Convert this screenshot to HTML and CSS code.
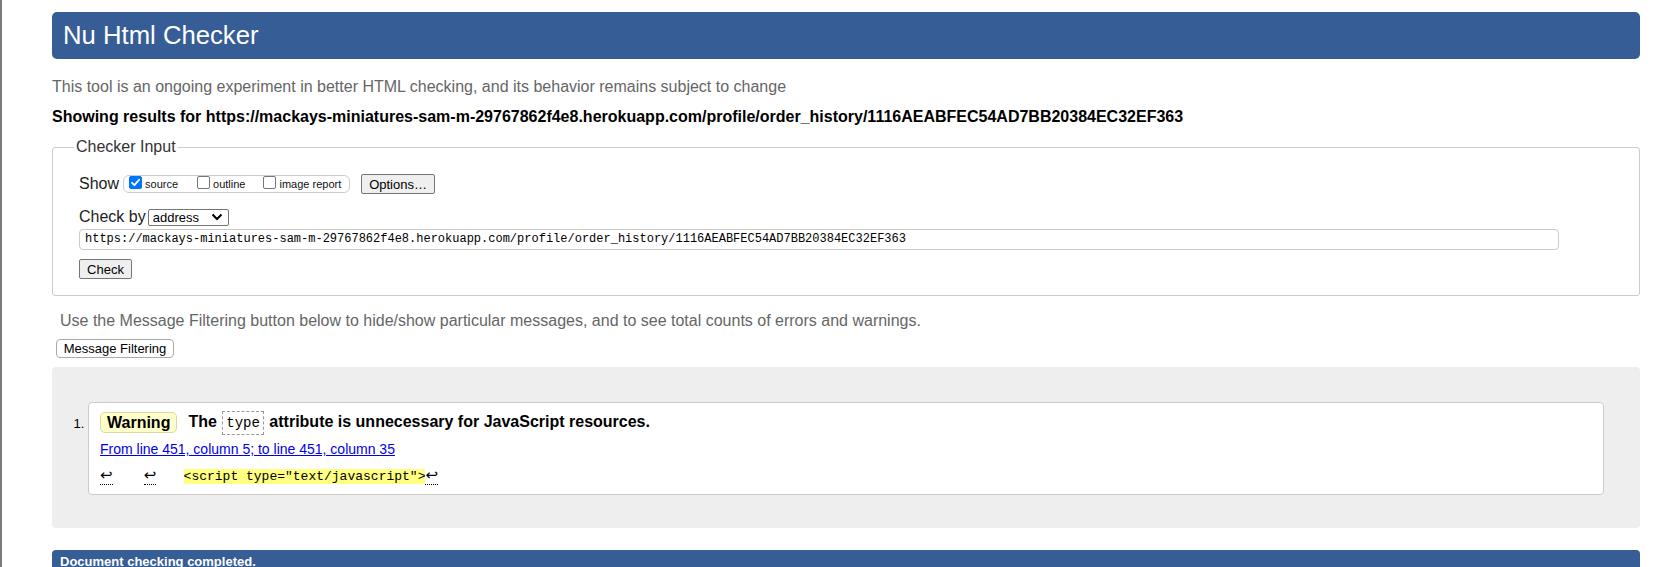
FILE: index.html
```html
<!DOCTYPE html>
<html lang="en">
<head>
<meta charset="utf-8">
<title>Nu Html Checker</title>
<link rel="stylesheet" href="styles.css">
</head>
<body>
<div class="page">
  <h1 class="title">Nu Html Checker</h1>
  <p class="intro">This tool is an ongoing experiment in better HTML checking, and its behavior remains subject to change</p>
  <p class="showing">Showing results for https://mackays-miniatures-sam-m-29767862f4e8.herokuapp.com/profile/order_history/1116AEABFEC54AD7BB20384EC32EF363</p>

  <fieldset class="input-box">
    <legend class="legend">Checker Input</legend>
    <div class="row show-row">
      <span class="label">Show</span>
      <span class="show-group">
        <label class="opt"><span class="cb checked"><svg viewBox="0 0 13 13" width="13" height="13"><path d="M3 6.8 L5.4 9.2 L10.2 3.6" fill="none" stroke="#fff" stroke-width="1.8" stroke-linecap="round" stroke-linejoin="round"/></svg></span>source</label>
        <label class="opt opt-outline"><span class="cb"></span>outline</label>
        <label class="opt opt-image"><span class="cb"></span>image report</label>
      </span>
      <span class="btn btn-options">Options…</span>
    </div>
    <div class="row checkby-row">
      <span class="label">Check by</span>
      <span class="select">address<svg class="chev" viewBox="0 0 12 8" width="12" height="8"><path d="M1.5 1.5 L6 6 L10.5 1.5" fill="none" stroke="#000" stroke-width="2"/></svg></span>
    </div>
    <div class="url-input">https://mackays-miniatures-sam-m-29767862f4e8.herokuapp.com/profile/order_history/1116AEABFEC54AD7BB20384EC32EF363</div>
    <span class="btn btn-check">Check</span>
  </fieldset>

  <p class="filter-note">Use the Message Filtering button below to hide/show particular messages, and to see total counts of errors and warnings.</p>
  <span class="btn btn-filter">Message Filtering</span>

  <div class="results">
    <ol class="messages">
      <li class="message">
        <p class="msg-head"><span class="badge">Warning</span> <span class="msg-text">The <code class="attr">type</code> attribute is unnecessary for JavaScript resources.</span></p>
        <p class="location"><a href="#l451" class="loc-link">From line 451, column 5; to line 451, column 35</a></p>
        <p class="extract"><span class="lf">↩</span>    <span class="lf lf-tight">↩</span>    <mark class="hl">&lt;script type="text/javascript"&gt;</mark><span class="lf">↩</span></p>
      </li>
    </ol>
  </div>

  <h2 class="done">Document checking completed.</h2>
</div>
</body>
</html>
```

FILE: styles.css
```css
html, body {
  margin: 0;
  padding: 0;
  background: #fff;
}
body {
  font-family: "Liberation Sans", Arial, sans-serif;
  font-size: 16px;
  color: #000;
  height: 567px;
  overflow: hidden;
}
.page {
  border-left: 2px solid #7a7a7a;
  height: 567px;
  box-sizing: border-box;
  padding: 12px 24px 0 50px;
  overflow: hidden;
}
.title {
  margin: 0;
  height: 47px;
  line-height: 46px;
  background: #365d95;
  color: #fff;
  font-weight: normal;
  font-size: 25.7px;
  padding-left: 11px;
  border-radius: 5px;
}
.intro {
  margin: 19px 0 0 0;
  line-height: 18px;
  color: #666;
}
.showing {
  margin: 12px 0 0 0;
  line-height: 18px;
  font-weight: bold;
}
.input-box {
  margin: 12px 0 0 0;
  padding: 18px 0 16px 26px;
  border: 1px solid #ccc;
  border-radius: 3px;
  min-width: 0;
}
.legend {
  padding: 0 2px;
  margin-left: -5px;
  color: #333;
  line-height: 18px;
}
.row {
  display: flex;
  align-items: center;
}
.label {
  line-height: 18px;
  color: #222;
}
.show-row {
  height: 20px;
}
.show-group {
  display: flex;
  align-items: center;
  height: 18px;
  box-sizing: border-box;
  margin-left: 4px;
  border: 1px solid #ccc;
  border-radius: 6px;
  padding: 0 7px 0 5px;
  width: 227px;
}
.opt {
  display: flex;
  align-items: center;
  font-size: 11px;
  color: #111;
}
.opt-outline { margin-left: 19px; }
.opt-image { margin-left: 18px; }
.cb {
  width: 13px;
  height: 13px;
  box-sizing: border-box;
  border: 1px solid #767676;
  border-radius: 2px;
  background: #fff;
  margin-right: 3px;
  margin-top: -3px;
  display: inline-flex;
}
.cb.checked {
  background: #0075ff;
  border-color: #0075ff;
}
.cb svg { display: block; margin: -1px; }
.btn {
  display: inline-flex;
  align-items: center;
  justify-content: center;
  box-sizing: border-box;
  font-size: 13px;
  background: #efefef;
  border: 1px solid #767676;
  border-radius: 2px;
  color: #000;
}
.btn-options {
  margin-left: 11px;
  width: 74px;
  height: 20px;
}
.checkby-row {
  margin-top: 14px;
  height: 18px;
}
.select {
  display: inline-flex;
  align-items: center;
  justify-content: space-between;
  box-sizing: border-box;
  width: 81px;
  height: 17px;
  margin-left: 2px;
  border: 1px solid #767676;
  border-radius: 2px;
  padding: 0 5px 0 4px;
  font-size: 13px;
}
.chev { display: block; }
.url-input {
  margin-top: 3px;
  width: 1480px;
  height: 21px;
  box-sizing: border-box;
  border: 1px solid #ccc;
  border-radius: 4px;
  padding: 0 5px;
  font-family: "Liberation Mono", "DejaVu Sans Mono", monospace;
  font-size: 12px;
  line-height: 19px;
  white-space: nowrap;
}
.btn-check {
  margin-top: 9px;
  width: 53px;
  height: 20px;
}
.filter-note {
  margin: 16px 0 0 8px;
  line-height: 18px;
  color: #666;
}
.btn-filter {
  margin: 9px 0 0 4px;
  width: 118px;
  height: 19px;
  background: #fff;
  border: 1px solid #aaa;
  border-radius: 4px;
}
.results {
  margin-top: 9px;
  background: #eee;
  border-radius: 4px;
  height: 161px;
  box-sizing: border-box;
  padding: 35px 36px 0 0;
}
.messages {
  margin: 0;
  padding-left: 36px;
}
.message {
  border: 1px solid #ccc;
  border-radius: 4px;
  background: #fff;
  height: 93px;
  box-sizing: border-box;
  padding: 9px 11px 0 11px;
  font-size: 13px;
}
.message::marker {
  font-size: 13px;
}
.msg-head {
  margin: 0;
  display: flex;
  align-items: center;
  height: 21px;
  font-size: 16px;
  font-weight: bold;
}
.badge {
  display: inline-block;
  box-sizing: border-box;
  height: 21px;
  line-height: 19px;
  padding: 0 6px;
  background: #ffffcc;
  border: 1px solid #ddd9a0;
  border-radius: 5px;
}
.msg-text { margin-left: 11px; }
.attr {
  display: inline-block;
  font-family: "Liberation Mono", "DejaVu Sans Mono", monospace;
  font-weight: normal;
  font-size: 14px;
  border: 1px dashed #999;
  padding: 2px 3px;
  line-height: 18px;
  margin: 0 1px;
}
.location {
  margin: 8px 0 0 0;
  line-height: 17px;
  font-size: 14px;
}
.loc-link {
  color: #0000ee;
  text-decoration: underline;
}
.extract {
  margin: 8px 0 0 0;
  font-family: "Liberation Mono", "DejaVu Sans Mono", monospace;
  font-size: 13px;
  line-height: 18px;
  white-space: pre;
}
.lf {
  font-family: "DejaVu Sans", sans-serif;
  font-size: 15px;
  border-bottom: 1px dotted #000;
}
.lf-tight {
  margin-right: -4px;
}
.hl {
  background: #ffff80;
  color: #000;
}
.done {
  margin: 22px 0 0 0;
  background: #365d95;
  color: #fff;
  font-size: 13px;
  font-weight: bold;
  height: 17px;
  box-sizing: border-box;
  overflow: hidden;
  line-height: 16px;
  padding: 4px 8px 0 8px;
  border-radius: 4px 4px 0 0;
}
```
